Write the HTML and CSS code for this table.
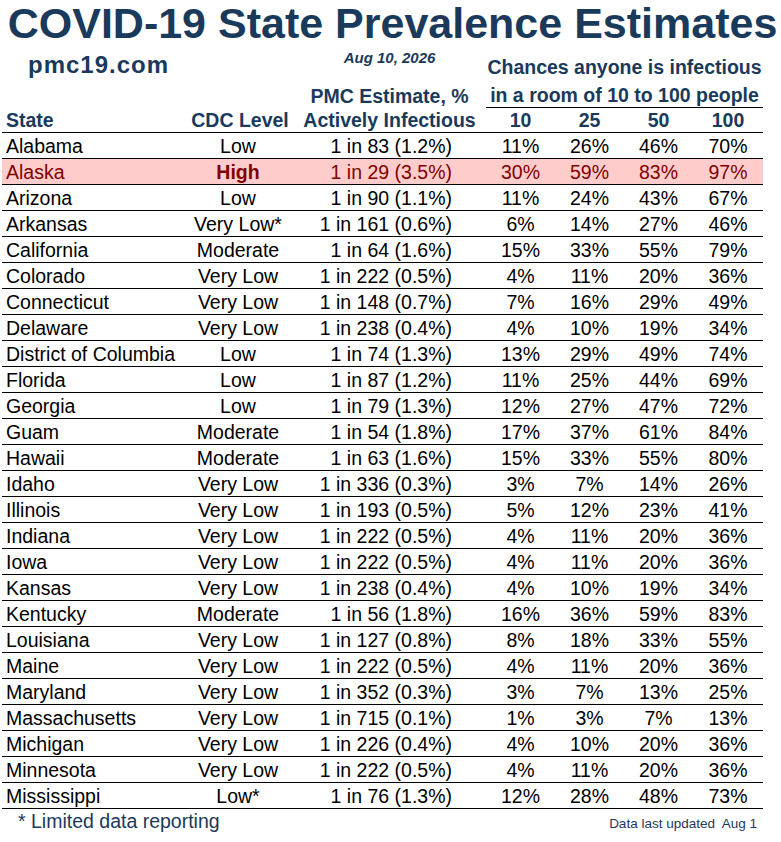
FILE: index.html
```html
<!DOCTYPE html>
<html>
<head>
<meta charset="utf-8">
<title>COVID-19 State Prevalence Estimates</title>
<link rel="stylesheet" href="styles.css">
</head>
<body>
<div class="page">
  <h1 class="title">COVID-19 State Prevalence Estimates</h1>
  <div class="head">
    <div class="hleft">
      <div class="site">pmc19.com</div>
      <div class="hcols">
        <div class="h-state">State</div>
        <div class="h-cdc">CDC Level</div>
      </div>
    </div>
    <div class="hpmc">
      <div class="date">Aug 10, 2026</div>
      <div class="hpmc-l1">PMC Estimate, %</div>
      <div class="hpmc-l2">Actively Infectious</div>
    </div>
    <div class="hpct">
      <div class="chance1">Chances anyone is infectious</div>
      <div class="chance2">in a room of 10 to 100 people</div>
      <div class="sizes">
        <div>10</div><div>25</div><div>50</div><div>100</div>
      </div>
    </div>
  </div>
  <div class="rows">
    <div class="row"><div class="c-state">Alabama</div><div class="c-cdc">Low</div><div class="c-pmc">1 in 83 (1.2%)</div><div class="c-pct">11%</div><div class="c-pct">26%</div><div class="c-pct">46%</div><div class="c-pct">70%</div></div>
    <div class="row hot"><div class="c-state">Alaska</div><div class="c-cdc strong">High</div><div class="c-pmc">1 in 29 (3.5%)</div><div class="c-pct">30%</div><div class="c-pct">59%</div><div class="c-pct">83%</div><div class="c-pct">97%</div></div>
    <div class="row"><div class="c-state">Arizona</div><div class="c-cdc">Low</div><div class="c-pmc">1 in 90 (1.1%)</div><div class="c-pct">11%</div><div class="c-pct">24%</div><div class="c-pct">43%</div><div class="c-pct">67%</div></div>
    <div class="row"><div class="c-state">Arkansas</div><div class="c-cdc">Very Low*</div><div class="c-pmc">1 in 161 (0.6%)</div><div class="c-pct">6%</div><div class="c-pct">14%</div><div class="c-pct">27%</div><div class="c-pct">46%</div></div>
    <div class="row"><div class="c-state">California</div><div class="c-cdc">Moderate</div><div class="c-pmc">1 in 64 (1.6%)</div><div class="c-pct">15%</div><div class="c-pct">33%</div><div class="c-pct">55%</div><div class="c-pct">79%</div></div>
    <div class="row"><div class="c-state">Colorado</div><div class="c-cdc">Very Low</div><div class="c-pmc">1 in 222 (0.5%)</div><div class="c-pct">4%</div><div class="c-pct">11%</div><div class="c-pct">20%</div><div class="c-pct">36%</div></div>
    <div class="row"><div class="c-state">Connecticut</div><div class="c-cdc">Very Low</div><div class="c-pmc">1 in 148 (0.7%)</div><div class="c-pct">7%</div><div class="c-pct">16%</div><div class="c-pct">29%</div><div class="c-pct">49%</div></div>
    <div class="row"><div class="c-state">Delaware</div><div class="c-cdc">Very Low</div><div class="c-pmc">1 in 238 (0.4%)</div><div class="c-pct">4%</div><div class="c-pct">10%</div><div class="c-pct">19%</div><div class="c-pct">34%</div></div>
    <div class="row"><div class="c-state">District of Columbia</div><div class="c-cdc">Low</div><div class="c-pmc">1 in 74 (1.3%)</div><div class="c-pct">13%</div><div class="c-pct">29%</div><div class="c-pct">49%</div><div class="c-pct">74%</div></div>
    <div class="row"><div class="c-state">Florida</div><div class="c-cdc">Low</div><div class="c-pmc">1 in 87 (1.2%)</div><div class="c-pct">11%</div><div class="c-pct">25%</div><div class="c-pct">44%</div><div class="c-pct">69%</div></div>
    <div class="row"><div class="c-state">Georgia</div><div class="c-cdc">Low</div><div class="c-pmc">1 in 79 (1.3%)</div><div class="c-pct">12%</div><div class="c-pct">27%</div><div class="c-pct">47%</div><div class="c-pct">72%</div></div>
    <div class="row"><div class="c-state">Guam</div><div class="c-cdc">Moderate</div><div class="c-pmc">1 in 54 (1.8%)</div><div class="c-pct">17%</div><div class="c-pct">37%</div><div class="c-pct">61%</div><div class="c-pct">84%</div></div>
    <div class="row"><div class="c-state">Hawaii</div><div class="c-cdc">Moderate</div><div class="c-pmc">1 in 63 (1.6%)</div><div class="c-pct">15%</div><div class="c-pct">33%</div><div class="c-pct">55%</div><div class="c-pct">80%</div></div>
    <div class="row"><div class="c-state">Idaho</div><div class="c-cdc">Very Low</div><div class="c-pmc">1 in 336 (0.3%)</div><div class="c-pct">3%</div><div class="c-pct">7%</div><div class="c-pct">14%</div><div class="c-pct">26%</div></div>
    <div class="row"><div class="c-state">Illinois</div><div class="c-cdc">Very Low</div><div class="c-pmc">1 in 193 (0.5%)</div><div class="c-pct">5%</div><div class="c-pct">12%</div><div class="c-pct">23%</div><div class="c-pct">41%</div></div>
    <div class="row"><div class="c-state">Indiana</div><div class="c-cdc">Very Low</div><div class="c-pmc">1 in 222 (0.5%)</div><div class="c-pct">4%</div><div class="c-pct">11%</div><div class="c-pct">20%</div><div class="c-pct">36%</div></div>
    <div class="row"><div class="c-state">Iowa</div><div class="c-cdc">Very Low</div><div class="c-pmc">1 in 222 (0.5%)</div><div class="c-pct">4%</div><div class="c-pct">11%</div><div class="c-pct">20%</div><div class="c-pct">36%</div></div>
    <div class="row"><div class="c-state">Kansas</div><div class="c-cdc">Very Low</div><div class="c-pmc">1 in 238 (0.4%)</div><div class="c-pct">4%</div><div class="c-pct">10%</div><div class="c-pct">19%</div><div class="c-pct">34%</div></div>
    <div class="row"><div class="c-state">Kentucky</div><div class="c-cdc">Moderate</div><div class="c-pmc">1 in 56 (1.8%)</div><div class="c-pct">16%</div><div class="c-pct">36%</div><div class="c-pct">59%</div><div class="c-pct">83%</div></div>
    <div class="row"><div class="c-state">Louisiana</div><div class="c-cdc">Very Low</div><div class="c-pmc">1 in 127 (0.8%)</div><div class="c-pct">8%</div><div class="c-pct">18%</div><div class="c-pct">33%</div><div class="c-pct">55%</div></div>
    <div class="row"><div class="c-state">Maine</div><div class="c-cdc">Very Low</div><div class="c-pmc">1 in 222 (0.5%)</div><div class="c-pct">4%</div><div class="c-pct">11%</div><div class="c-pct">20%</div><div class="c-pct">36%</div></div>
    <div class="row"><div class="c-state">Maryland</div><div class="c-cdc">Very Low</div><div class="c-pmc">1 in 352 (0.3%)</div><div class="c-pct">3%</div><div class="c-pct">7%</div><div class="c-pct">13%</div><div class="c-pct">25%</div></div>
    <div class="row"><div class="c-state">Massachusetts</div><div class="c-cdc">Very Low</div><div class="c-pmc">1 in 715 (0.1%)</div><div class="c-pct">1%</div><div class="c-pct">3%</div><div class="c-pct">7%</div><div class="c-pct">13%</div></div>
    <div class="row"><div class="c-state">Michigan</div><div class="c-cdc">Very Low</div><div class="c-pmc">1 in 226 (0.4%)</div><div class="c-pct">4%</div><div class="c-pct">10%</div><div class="c-pct">20%</div><div class="c-pct">36%</div></div>
    <div class="row"><div class="c-state">Minnesota</div><div class="c-cdc">Very Low</div><div class="c-pmc">1 in 222 (0.5%)</div><div class="c-pct">4%</div><div class="c-pct">11%</div><div class="c-pct">20%</div><div class="c-pct">36%</div></div>
    <div class="row"><div class="c-state">Mississippi</div><div class="c-cdc">Low*</div><div class="c-pmc">1 in 76 (1.3%)</div><div class="c-pct">12%</div><div class="c-pct">28%</div><div class="c-pct">48%</div><div class="c-pct">73%</div></div>
  </div>
  <div class="foot">
    <div class="note">* Limited data reporting</div>
    <div class="updated">Data last updated&nbsp; Aug 1</div>
  </div>
</div>
</body>
</html>
```
FILE: styles.css
```css
html, body {
  margin: 0;
  padding: 0;
  background: #ffffff;
}

.page {
  width: 781px;
  font-family: "Liberation Sans", Arial, sans-serif;
  color: #000;
}

.title {
  margin: 0;
  padding-left: 4px;
  font-size: 43px;
  line-height: 47px;
  font-weight: bold;
  color: #1a3a5c;
  text-align: center;
  white-space: nowrap;
}

.head {
  display: flex;
  margin-left: 2px;
  width: 761px;
  height: 85px;
  border-bottom: 1px solid #000;
  color: #1a3a5c;
  font-weight: bold;
  font-size: 19.5px;
  line-height: 24px;
  white-space: nowrap;
}

.hleft {
  width: 288px;
  display: flex;
  flex-direction: column;
}

.site {
  padding-top: 4px;
  padding-left: 26px;
  font-size: 24px;
  line-height: 28px;
  letter-spacing: 1px;
}

.hcols {
  margin-top: auto;
  display: flex;
}

.h-state {
  width: 188px;
  padding-left: 4px;
  box-sizing: border-box;
}

.h-cdc {
  width: 100px;
  text-align: center;
}

.hpmc {
  width: 196px;
  display: flex;
  flex-direction: column;
  text-align: center;
  padding-left: 3px;
  box-sizing: border-box;
}

.date {
  padding-top: 2px;
  font-size: 15px;
  line-height: 18px;
  font-style: italic;
}

.hpmc-l1 {
  margin-top: auto;
}

.hpct {
  width: 277px;
  display: flex;
  flex-direction: column;
  text-align: center;
}

.chance1 {
  padding-top: 8px;
}

.chance2 {
  margin-top: auto;
  border-bottom: 1px solid #000;
}

.sizes {
  display: grid;
  grid-template-columns: 69px 69px 69px 70px;
}

.rows {
  margin-left: 2px;
  width: 761px;
}

.row {
  display: grid;
  grid-template-columns: 188px 100px 196px 69px 69px 69px 70px;
  height: 26px;
  box-sizing: border-box;
  border-bottom: 1px solid #000;
  font-size: 19.5px;
  line-height: 23px;
  padding-top: 2px;
  white-space: nowrap;
}

.row.hot {
  background: #ffcccc;
  color: #800000;
}

.c-state {
  padding-left: 4px;
}

.c-cdc {
  text-align: center;
  padding-right: 4px;
}

.strong {
  font-weight: bold;
}

.c-pmc {
  text-align: right;
  padding-right: 34px;
}

.c-pct {
  text-align: center;
}

.foot {
  display: flex;
  align-items: baseline;
  justify-content: space-between;
  margin-left: 2px;
  width: 761px;
  color: #1a3a5c;
}

.note {
  padding-left: 16px;
  font-size: 19.5px;
  line-height: 24px;
}

.updated {
  padding-right: 6px;
  font-size: 13.5px;
  color: #1a3a5c;
}
```
